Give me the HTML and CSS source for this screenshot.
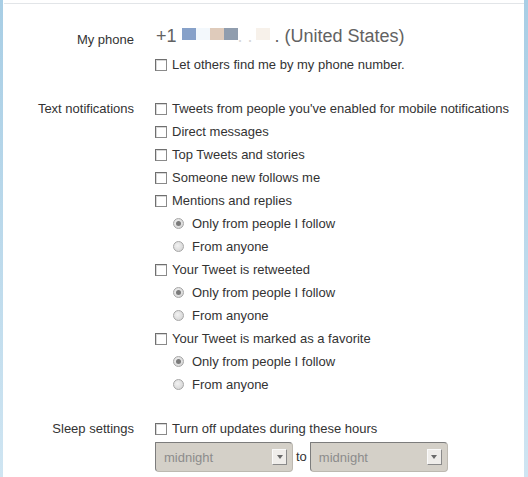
FILE: index.html
```html
<!DOCTYPE html>
<html>
<head>
<meta charset="utf-8">
<link rel="stylesheet" href="styles.css">
</head>
<body>
<div class="frame">
  <div class="sheet">
    <div class="section phone-section">
      <div class="label label-phone">My phone</div>
      <div class="content">
        <div class="number">+1 <span class="blk b1"></span><span class="blk b2"></span><span class="blk b3"></span><span class="blk b4"></span><span class="gap">. .</span><span class="blk b5"></span> . (United States)</div>
        <div class="opt opt-first"><span class="cb"></span>Let others find me by my phone number.</div>
      </div>
    </div>

    <div class="section">
      <div class="label">Text notifications</div>
      <div class="content">
        <div class="opt"><span class="cb"></span>Tweets from people you've enabled for mobile notifications</div>
        <div class="opt"><span class="cb"></span>Direct messages</div>
        <div class="opt"><span class="cb"></span>Top Tweets and stories</div>
        <div class="opt"><span class="cb"></span>Someone new follows me</div>
        <div class="opt"><span class="cb"></span>Mentions and replies</div>
        <div class="opt sub"><span class="rb on"></span>Only from people I follow</div>
        <div class="opt sub"><span class="rb"></span>From anyone</div>
        <div class="opt"><span class="cb"></span>Your Tweet is retweeted</div>
        <div class="opt sub"><span class="rb on"></span>Only from people I follow</div>
        <div class="opt sub"><span class="rb"></span>From anyone</div>
        <div class="opt"><span class="cb"></span>Your Tweet is marked as a favorite</div>
        <div class="opt sub"><span class="rb on"></span>Only from people I follow</div>
        <div class="opt sub"><span class="rb"></span>From anyone</div>
      </div>
    </div>

    <div class="section">
      <div class="label">Sleep settings</div>
      <div class="content">
        <div class="opt"><span class="cb"></span>Turn off updates during these hours</div>
        <div class="hours">
          <div class="select"><span class="sel-text">midnight</span><span class="sel-btn"><span class="tri"></span></span></div>
          <span class="to">to</span>
          <div class="select"><span class="sel-text">midnight</span><span class="sel-btn"><span class="tri"></span></span></div>
        </div>
      </div>
    </div>
  </div>
</div>
</body>
</html>
```

FILE: styles.css
```css
html, body {
  margin: 0;
  padding: 0;
}
body {
  font-family: Arial, "Liberation Sans", sans-serif;
  font-size: 13px;
  color: #333;
}
.frame {
  width: 528px;
  height: 477px;
  box-sizing: border-box;
  padding: 0 4px 0 3px;
  background: linear-gradient(#a8cee5, #cfe5f2);
  overflow: hidden;
}
.sheet {
  height: 100%;
  background: #fff;
  padding-top: 3px;
  box-sizing: border-box;
}
.sheet::before {
  content: "";
  display: block;
  height: 1px;
  margin-left: 1px;
  background: #e2e5e8;
}
.section {
  display: grid;
  grid-template-columns: 131px 1fr;
  column-gap: 21px;
  margin-top: 21px;
}
.phone-section {
  margin-top: 19px;
}
.label {
  text-align: right;
  line-height: 23px;
  white-space: nowrap;
}
.label-phone {
  padding-top: 5px;
}
.content {
  display: flex;
  flex-direction: column;
}
.number {
  font-size: 18px;
  line-height: 26px;
  color: #626262;
  margin-left: 1px;
  white-space: nowrap;
}
.blk {
  display: inline-block;
  width: 14px;
  height: 12px;
  vertical-align: 2px;
}
.b1 { background: #87a1c9; }
.b2 { background: #f3f8fc; }
.b3 { background: #dfcbbb; }
.b4 { background: #909dae; }
.b5 { background: #f7f1ea; }
.gap {
  display: inline-block;
  width: 18px;
  color: #d8d8d8;
  white-space: nowrap;
  overflow: visible;
}
.opt {
  display: flex;
  align-items: center;
  height: 23px;
  line-height: 23px;
  white-space: nowrap;
}
.opt-first {
  margin-top: 4px;
}
.cb {
  width: 12px;
  height: 12px;
  box-sizing: border-box;
  border: 1px solid #6f6f6f;
  border-right-color: #8a8a8a;
  border-bottom-color: #8a8a8a;
  background: #fff;
  box-shadow: inset 1px 1px 0 #d8d8d8;
  margin-right: 5px;
  flex: none;
}
.sub {
  padding-left: 18px;
}
.rb {
  width: 11px;
  height: 11px;
  box-sizing: border-box;
  border-radius: 50%;
  border: 1px solid #a6a6a6;
  background: radial-gradient(circle at 40% 40%, #f2f2f2, #cfcfcf);
  margin-right: 8px;
  flex: none;
  position: relative;
}
.rb.on::after {
  content: "";
  position: absolute;
  left: 2px;
  top: 2px;
  width: 5px;
  height: 5px;
  border-radius: 50%;
  background: #7a7a7a;
}
.hours {
  display: flex;
  align-items: center;
  margin-top: 2px;
}
.select {
  width: 138px;
  height: 30px;
  box-sizing: border-box;
  background: #d4d0c8;
  border: 1px solid #bdb9b1;
  border-top-color: #7c7c7c;
  border-left-color: #7c7c7c;
  border-radius: 1px 4px 4px 4px;
  display: flex;
  align-items: center;
  justify-content: space-between;
  padding: 0 5px 0 8px;
}
.sel-text {
  color: #8c8c8c;
}
.sel-btn {
  width: 15px;
  height: 16px;
  box-sizing: border-box;
  background: #efedea;
  border: 1px solid #fafafa;
  border-right-color: #8a8a8a;
  border-bottom-color: #8a8a8a;
  display: flex;
  align-items: center;
  justify-content: center;
}
.tri {
  width: 0;
  height: 0;
  border-left: 3px solid transparent;
  border-right: 3px solid transparent;
  border-top: 4px solid #6a6a6a;
}
.to {
  margin: 0 3px;
  line-height: 30px;
}
```
